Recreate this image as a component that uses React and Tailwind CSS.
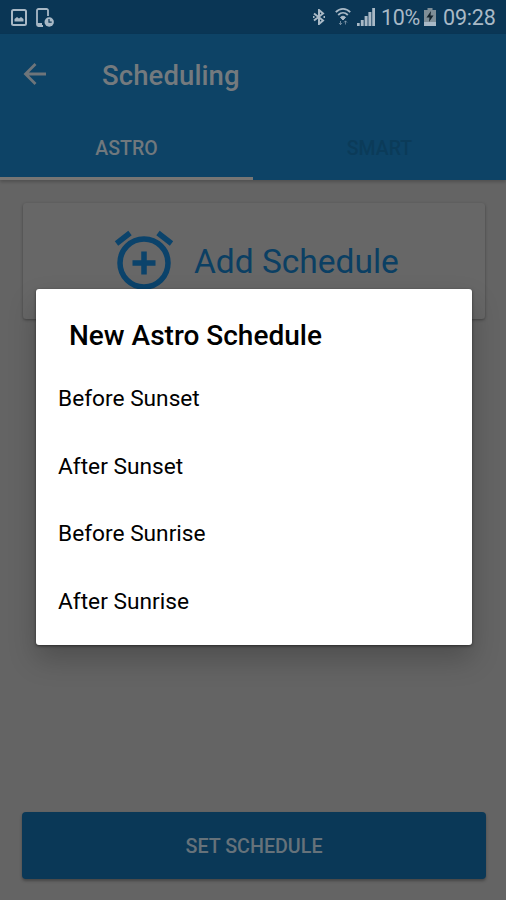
import React from 'react';

const options = ['Before Sunset', 'After Sunset', 'Before Sunrise', 'After Sunrise'];

const StatusBar = () => (
  <div className="flex h-[34px] items-center justify-between bg-[#0a3655] pr-[11px] pl-[11px] text-[#a9b9c6]">
    <div className="flex items-center gap-[9px]">
      <svg className="h-[17px] w-[16px]" viewBox="0 0 16 17" fill="none">
        <rect x="1" y="1" width="14" height="15" rx="1.5" stroke="currentColor" strokeWidth="2" />
        <path d="M3.5 12.5V10l2.5-2 2 1.500L10 8l2.500 2v2.500z" fill="currentColor" />
      </svg>
      <svg className="h-[19px] w-[18px]" viewBox="0 0 18 19" fill="none">
        <path d="M12 8V2.500a1.500 1.500 0 0 0-1.500-1.500h-8A1.500 1.500 0 0 0 1 2.500v14A1.500 1.500 0 0 0 2.500 18H7" stroke="currentColor" strokeWidth="1.800" />
        <path d="M1 15h5v3H2z" fill="currentColor" />
        <circle cx="13.200" cy="14" r="4.700" fill="currentColor" />
        <path d="M13 11v3.200h2.700" stroke="#0a3655" strokeWidth="1.200" />
      </svg>
    </div>
    <div className="flex items-center">
      <svg className="mr-[9px] h-[16px] w-[14px]" viewBox="0 0 14 16" fill="none" stroke="currentColor" strokeWidth="2">
        <path d="M2 4.500l9 7L7 15V1l4 3.500-9 7" />
        <path d="M1 8h1.500M11.500 8H13" />
      </svg>
      <svg className="mr-[6px] h-[18px] w-[16px]" viewBox="0 0 16 18" fill="none" stroke="currentColor">
        <path d="M.8 4.200C5-.2 11-.2 15.200 4.200" strokeWidth="1.800" />
        <path d="M3.200 7c2.900-2.900 6.700-2.900 9.600 0" strokeWidth="1.800" />
        <path d="M5.500 9.300c1.500-1.400 3.500-1.400 5 0L8 12z" fill="currentColor" strokeWidth="1" />
        <path d="M5.500 13v3.500M10.500 13v3.500M4 15l1.500 1.700L7 15M9 14.500l1.500-1.700 1.500 1.700" strokeWidth="1" opacity=".6" />
      </svg>
      <svg className="mr-[6px] h-[18px] w-[18px]" viewBox="0 0 18 18" fill="currentColor">
        <path d="M0 15h2.700v3H0zM3.800 12h2.900v6H3.800zM7.600 8h3v10h-3zM11.400 4h3v14h-3zM15.200 0H18v18h-2.800z" />
      </svg>
      <span className="w-[39px] pt-px text-[21.500px] leading-[34px] tracking-[-0.3px] whitespace-nowrap">10%</span>
      <svg className="mr-[7px] ml-[4px] h-[18px] w-[12px]" viewBox="0 0 12 18">
        <path d="M3.500 0h5v2H12v16H0V2h3.500z" fill="#7f8e97" />
        <path d="M0 14h12v4H0z" fill="currentColor" />
        <path d="M7 3L2.500 9.500h3L5 14l4.500-6.500h-3z" fill="#14242e" />
      </svg>
      <span className="w-[52px] pt-px text-[21.500px] leading-[34px] tracking-[-0.2px] whitespace-nowrap">09:28</span>
    </div>
  </div>
);

const Header = () => (
  <header className="flex h-[146px] flex-col bg-[#0d4366] shadow-[0_2px_3px_rgba(0,0,0,0.2)]">
    <div className="flex h-[82px] items-center pl-[23px]">
      <svg className="mb-[2px] h-[24px] w-[24px]" viewBox="0 0 24 24" fill="none" stroke="#6e757a" strokeWidth="2.800">
        <path d="M23 12H3M12.500 2L2.500 12l10 10" />
      </svg>
      <h1 className="ml-[55px] pt-[2px] text-[27.500px] font-medium tracking-[0.1px] text-[#747a7e]">Scheduling</h1>
    </div>
    <div className="grid h-16 grid-cols-2 text-center text-[19.500px] leading-[65px] font-medium">
      <div className="h-16 border-b-[3px] border-[#777674] text-[#70787d]">ASTRO</div>
      <div className="text-[#0b3b59]">SMART</div>
    </div>
  </header>
);

const AddSchedule = () => (
  <div className="mr-[21px] ml-[23px] mt-[23px] flex h-[116px] items-center rounded-[3px] bg-[#676767] pl-[91px] shadow-[0_1px_3px_rgba(0,0,0,0.35)]">
    <svg className="mb-[2px] h-[60px] w-[60px]" viewBox="0 0 60 60" fill="none" stroke="#0b436b">
      <circle cx="30" cy="33" r="24" strokeWidth="5.500" />
      <path d="M30 21.500v23M18.500 33h23" strokeWidth="5.500" />
      <path d="M2.500 13.500L16 3M44 3l13.500 10.500" strokeWidth="5.500" />
    </svg>
    <span className="ml-5 pt-[2px] text-[33.500px] whitespace-nowrap text-[#0b3f63]">Add Schedule</span>
  </div>
);

const ScheduleDialog = () => (
  <div className="absolute top-[289px] left-[36px] h-[356px] w-[436px] rounded-[3px] bg-white text-black shadow-[0_1px_3px_rgba(0,0,0,0.5),0_14px_28px_rgba(0,0,0,0.22)]">
    <h2 className="mt-[31px] ml-[33px] text-[28px] leading-[32px] font-medium">New Astro Schedule</h2>
    <ul className="mt-[13px] ml-[22px] text-[22.700px] leading-[67.500px]">
      {options.map((option) => (
        <li key={option}>{option}</li>
      ))}
    </ul>
  </div>
);

export default function App() {
  return (
    <div className="relative flex h-[900px] w-[506px] flex-col overflow-hidden bg-[#646464] font-[Roboto,sans-serif]">
      <StatusBar />
      <Header />
      <AddSchedule />
      <button className="mr-[20px] ml-[22px] mt-auto mb-[21px] h-[67px] rounded-[4px] bg-[#0a3857] pt-[2px] text-[19.700px] font-medium text-[#66727a] shadow-[0_2px_3px_rgba(0,0,0,0.3)]">
        SET SCHEDULE
      </button>
      <ScheduleDialog />
    </div>
  );
}
